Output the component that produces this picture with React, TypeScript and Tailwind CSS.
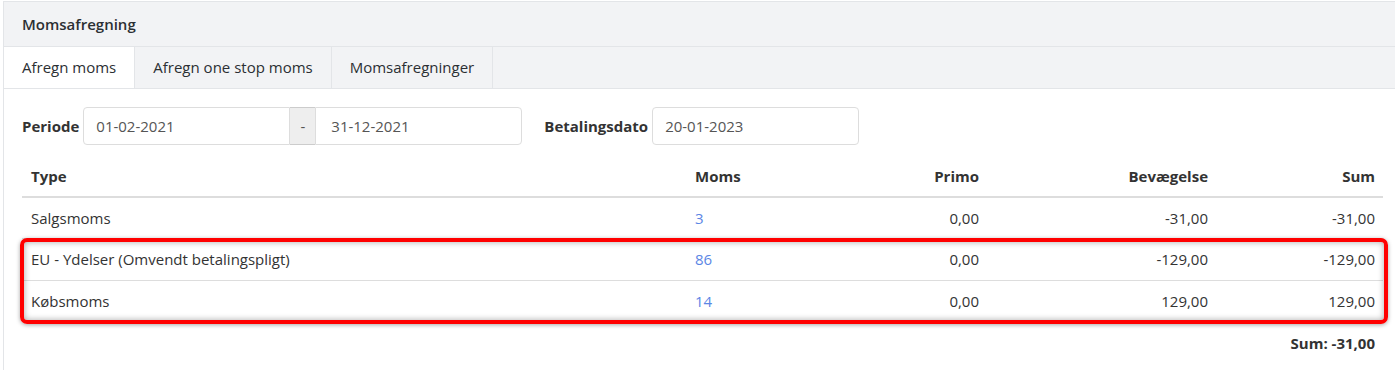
import React from 'react';

const rows = [
  { type: 'Salgsmoms', moms: '3', primo: '0,00', bev: '-31,00', sum: '-31,00' },
  { type: 'EU - Ydelser (Omvendt betalingspligt)', moms: '86', primo: '0,00', bev: '-129,00', sum: '-129,00' },
  { type: 'Købsmoms', moms: '14', primo: '0,00', bev: '129,00', sum: '129,00' },
];

const tabs = ['Afregn moms', 'Afregn one stop moms', 'Momsafregninger'];

const App: React.FC = () => {
  return (
    <div className="h-[370px] w-[1395px] overflow-hidden bg-white pt-px pl-[3px] text-[15px] text-[#333] [font-family:'Open_Sans',sans-serif]">
      <div className="h-[400px] w-[1400px] border-l border-t border-[#e3e5e8]">
        <div className="flex h-[45px] items-center border-b border-[#e3e5e8] bg-[#f2f3f5] pl-[18px] font-semibold text-[#2b2f33]">
          Momsafregning
        </div>
        <div className="flex h-[42px] border-b border-[#e3e5e8] bg-[#f2f3f5]">
          {tabs.map((t, i) => (
            <div
              key={t}
              className={
                i === 0
                  ? 'flex items-center border-r border-[#e3e5e8] bg-white px-[18px] text-[#2b2f33]'
                  : 'flex items-center border-r border-[#e3e5e8] px-[18px] text-[#2b2f33]'
              }
            >
              {t}
            </div>
          ))}
        </div>

        <div className="px-[18px] pt-[18px]">
          <div className="flex items-center">
            <span className="mr-[4px] font-bold">Periode</span>
            <div className="flex h-[38px]">
              <div className="flex w-[207px] items-center rounded-l-[4px] border border-[#ddd] px-[12px] text-[#555]">01-02-2021</div>
              <div className="flex w-[25px] items-center justify-center border-y border-[#ccc] bg-[#eee] text-[#555]">-</div>
              <div className="flex w-[207px] items-center rounded-r-[4px] border border-[#ddd] px-[15px] text-[#555]">31-12-2021</div>
            </div>
            <span className="ml-[22px] mr-[4px] font-bold">Betalingsdato</span>
            <div className="flex h-[38px] w-[207px] items-center rounded-[4px] border border-[#ddd] px-[12px] text-[#555]">20-01-2023</div>
          </div>

          <div className="relative mt-[12px] w-[1361px]">
            <table className="w-full table-fixed border-collapse">
              <colgroup>
                <col className="w-[665px]" />
                <col className="w-[150px]" />
                <col className="w-[150px]" />
                <col className="w-[229px]" />
                <col className="w-[167px]" />
              </colgroup>
              <thead>
                <tr className="border-b-2 border-[#ddd]">
                  <th className="px-[9px] pt-[8px] pb-[8px] text-left font-bold">Type</th>
                  <th className="px-[8px] pt-[8px] pb-[8px] text-left font-bold">Moms</th>
                  <th className="px-[8px] pt-[8px] pb-[8px] text-right font-bold">Primo</th>
                  <th className="px-[8px] pt-[8px] pb-[8px] text-right font-bold">Bevægelse</th>
                  <th className="px-[8px] pt-[8px] pb-[8px] text-right font-bold">Sum</th>
                </tr>
              </thead>
              <tbody>
                {rows.map((r, i) => (
                  <tr key={r.type} className={i < rows.length - 1 ? 'h-[42px] border-b border-[#ddd]' : 'h-[41px]'}>
                    <td className="px-[9px]">{r.type}</td>
                    <td className="px-[8px] text-[#5b86e5]">{r.moms}</td>
                    <td className="px-[8px] text-right">{r.primo}</td>
                    <td className="px-[8px] text-right">{r.bev}</td>
                    <td className="px-[8px] text-right">{r.sum}</td>
                  </tr>
                ))}
              </tbody>
            </table>
            <div className="pointer-events-none absolute left-[-2px] top-[81px] h-[86px] w-[1368px] rounded-[7px] border-4 border-solid border-[#ff0000] shadow-[inset_0_0_6px_rgba(0,0,0,0.35),0_1px_4px_rgba(0,0,0,0.35)]" />
            <div className="pt-[10px] pr-[8px] text-right font-bold">Sum: -31,00</div>
          </div>
        </div>
      </div>
    </div>
  );
};

export default App;
